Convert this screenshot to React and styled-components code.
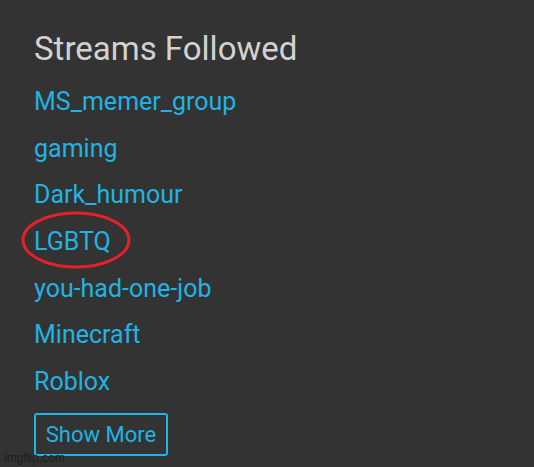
import React from 'react';
import { styled, createGlobalStyle } from 'styled-components';

const GlobalStyle = createGlobalStyle`
  html, body {
    margin: 0;
    padding: 0;
    background: #333333;
  }
  body {
    font-family: Roboto, "Noto Sans", sans-serif;
  }
`;

const streams = [
  'MS_memer_group',
  'gaming',
  'Dark_humour',
  'LGBTQ',
  'you-had-one-job',
  'Minecraft',
  'Roblox',
];

const Page = styled.div`
  position: relative;
  width: 534px;
  height: 467px;
  overflow: hidden;
  background: #333333;
`;

const Panel = styled.section`
  display: flex;
  flex-direction: column;
  align-items: flex-start;
  padding: 29px 0 0 34px;
`;

const Title = styled.h2`
  margin: 0 0 9px;
  font-size: 33px;
  line-height: 40px;
  font-weight: 400;
  color: #d2d2d2;
`;

const StreamList = styled.ul`
  list-style: none;
  margin: 0;
  padding: 0;
`;

const StreamItem = styled.li`
  position: relative;
  height: 46.7px;
  display: flex;
  align-items: center;
`;

const StreamLink = styled.a`
  font-size: 25px;
  color: #20b3e4;
  text-decoration: none;
`;

// red marker ring drawn over one of the stream names
const Circle = styled.svg`
  position: absolute;
  left: -13px;
  top: -8px;
  width: 112px;
  height: 60px;
  overflow: visible;
  pointer-events: none;
`;

const ShowMore = styled.button`
  margin-top: 8px;
  width: 134px;
  height: 43px;
  padding: 0;
  background: transparent;
  border: 2px solid #20b3e4;
  border-radius: 3px;
  color: #20b3e4;
  font-family: inherit;
  font-size: 22px;
  cursor: pointer;
`;

const Watermark = styled.span`
  position: absolute;
  left: 4px;
  bottom: 2px;
  font-family: "Liberation Sans", Arial, sans-serif;
  font-size: 12px;
  color: #1e1e1e;
`;

export default function App() {
  return (
    <Page>
      <GlobalStyle />
      <Panel>
        <Title>Streams Followed</Title>
        <StreamList>
          {streams.map((s) => (
            <StreamItem key={s}>
              <StreamLink href="#">{s}</StreamLink>
              {s === 'LGBTQ' && (
                <Circle viewBox="0 0 112 60">
                  <ellipse cx="55" cy="30" rx="53" ry="27" fill="none" stroke="#e3212b" strokeWidth="3" />
                </Circle>
              )}
            </StreamItem>
          ))}
        </StreamList>
        <ShowMore>Show More</ShowMore>
      </Panel>
      <Watermark>imgflip.com</Watermark>
    </Page>
  );
}
